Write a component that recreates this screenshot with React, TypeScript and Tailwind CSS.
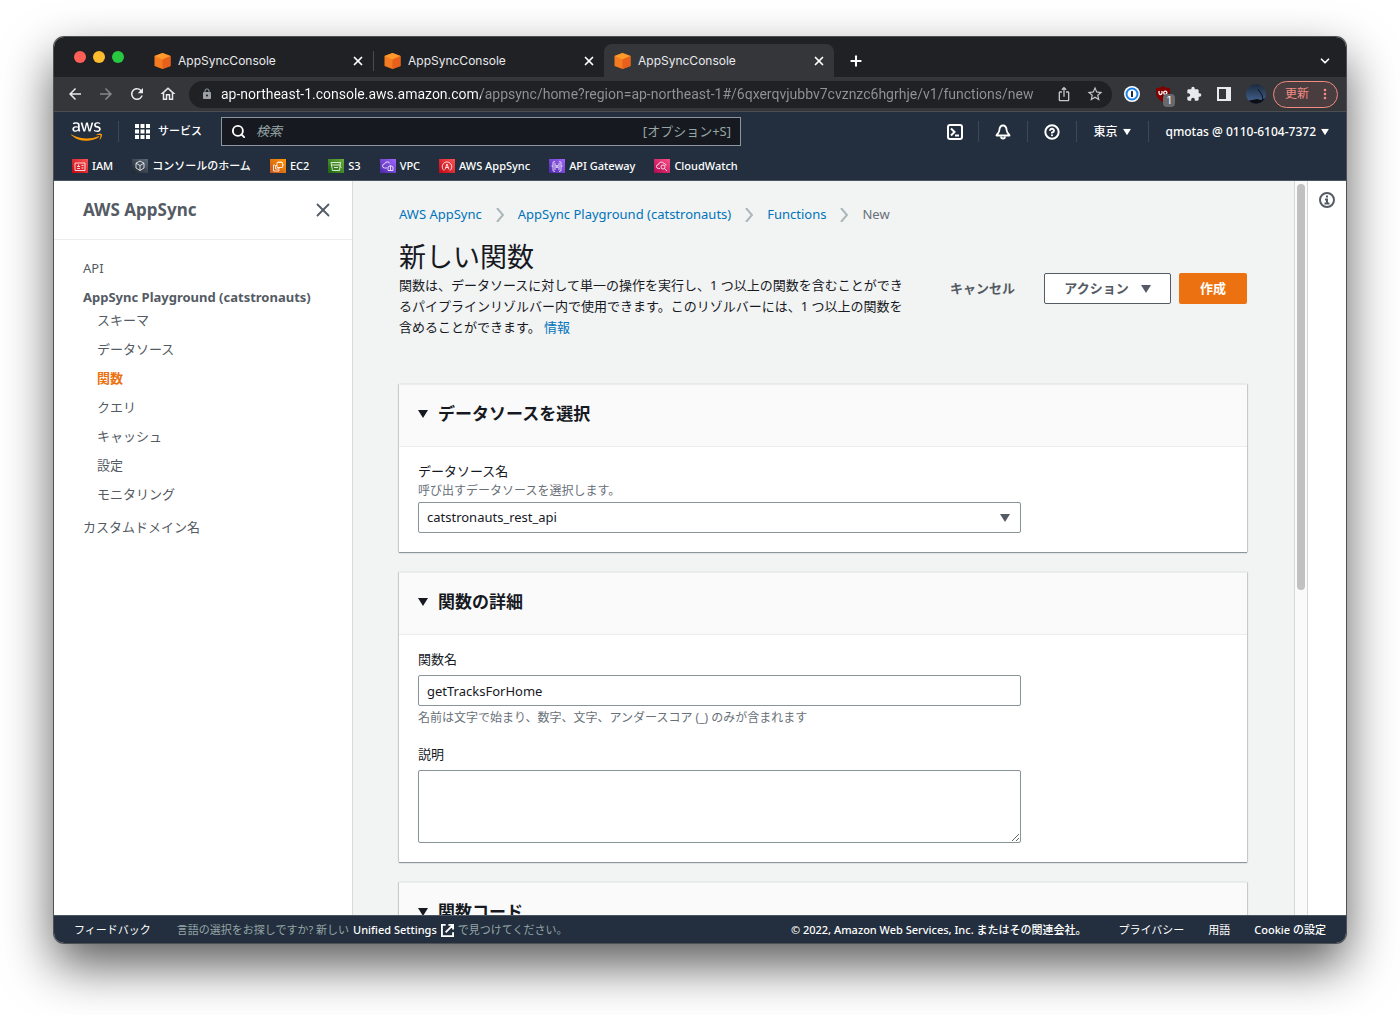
import type { ReactNode } from "react";
import {
  MdArrowBack,
  MdArrowForward,
  MdExtension,
  MdIosShare,
  MdLock,
  MdMoreVert,
  MdOutlineHome,
  MdRefresh,
  MdStarBorder
} from "react-icons/md";
import { FaAws } from "react-icons/fa";
import { ChevronDown, CircleHelp, Plus, Search, X } from "lucide-react";

const PAGE_URL =
  "ap-northeast-1.console.aws.amazon.com/appsync/home?region=ap-northeast-1#/6qxerqvjubbv7cvznzc6hgrhje/v1/functions/new";

const TABS = [
  { id: 1, title: "AppSyncConsole", active: false },
  { id: 2, title: "AppSyncConsole", active: false },
  { id: 3, title: "AppSyncConsole", active: true }
];

const SIDE_LINKS = ["スキーマ", "データソース", "関数", "クエリ", "キャッシュ", "設定", "モニタリング"];

type Favorite = { label: string; from: string; to: string; glyph: ReactNode };

const FAVORITES: Favorite[] = [
  {
    label: "IAM",
    from: "#bd0816",
    to: "#ff5252",
    glyph: <path d="M3 4h10v7.500H3zM5 9.500h3M5 7.500h3M6.500 5.500v2M9.500 6.500h2M9.500 9h2" />
  },
  {
    label: "コンソールのホーム",
    from: "#1d242e",
    to: "#5d6b7a",
    glyph: <path d="M8 2l4 2.200v4.800L8 11.500 4 9V4.200zM4 4.200l4 2.300 4-2.300M8 6.500v5" />
  },
  {
    label: "EC2",
    from: "#c8511b",
    to: "#ff9900",
    glyph: <path d="M7 3.500h5.500v5H7zM5 6H3.500v6H9v-1.500M9 3.500V2M11 3.500V2M12.500 6H14M7 6.500H5.500v3.500H9V8.500" />
  },
  {
    label: "S3",
    from: "#1b660f",
    to: "#6cae3e",
    glyph: <path d="M3 3.500h9.500L11.500 11.500h-7zM3.500 6H12M6 8.500h4M12 7.500l1.500 1" />
  },
  {
    label: "VPC",
    from: "#4d27a8",
    to: "#a166ff",
    glyph: <path d="M7 9H4.500a2 2 0 0 1 0-4A3 3 0 0 1 10 4.500M8 8l2.500-1.500L13 8v3.500H8zM10.500 7v4.500" />
  },
  {
    label: "AWS AppSync",
    from: "#bd0816",
    to: "#ff5252",
    glyph: <path d="M5 11.500a4.800 4.800 0 1 1 6 0M6 10.500l2-5.500 2 5.500M6.800 8.500h2.400" />
  },
  {
    label: "API Gateway",
    from: "#4d27a8",
    to: "#a166ff",
    glyph: <path d="M6 2.500L4 3.200v8.600l2 .7M10 2.500l2 .7v8.600l-2 .7M6 4v7M10 4v7M7 6l2 3M9 6L7 9M2.500 7H4M12 7h1.500" />
  },
  {
    label: "CloudWatch",
    from: "#b0084d",
    to: "#ff4f8b",
    glyph: (
      <>
        <path d="M6 9.500H4.500a2 2 0 0 1 0-4A3 3 0 0 1 10 4.500 2 2 0 0 1 12 6.500M10.500 9.500L13 12" />
        <circle cx="9" cy="8" r="2" />
      </>
    )
  }
];

function CubeIcon() {
  return (
    <svg viewBox="0 0 17 16" className="h-4 w-[17px] shrink-0" aria-hidden="true">
      <path d="M8.500 0l8 3v10l-8 3-8-3V3z" fill="#f47b20" />
      <path d="M8.500 0l8 3-8 3.500-8-3.500z" fill="#fd9a2b" />
      <path d="M16.500 3l-8 3.500V16l8-3z" fill="#e95f1c" />
    </svg>
  );
}

function Caret({ className = "" }: { className?: string }) {
  return (
    <svg viewBox="0 0 10 8" fill="currentColor" className={`h-2 w-[10px] shrink-0 ${className}`} aria-hidden="true">
      <path d="M0 0h10L5 8z" />
    </svg>
  );
}

function NavDivider() {
  return <span className="h-[21px] w-px bg-[#3c4856]" />;
}

function TabStrip() {
  return (
    <div className="flex h-10 shrink-0 items-end bg-[#202124] pl-5">
      <div className="flex h-10 w-[70px] shrink-0 items-center gap-[7px]">
        <button type="button" aria-label="閉じる" className="size-3 rounded-full bg-[#ff5f57]" />
        <button type="button" aria-label="最小化" className="size-3 rounded-full bg-[#febc2e]" />
        <button type="button" aria-label="最大化" className="size-3 rounded-full bg-[#28c840]" />
      </div>
      {TABS.map((tab) => (
        <div
          key={tab.id}
          className={`flex h-[33px] w-[230px] items-center rounded-t-lg pr-2 pl-[10px] ${tab.active ? "bg-[#35363a]" : ""}`}
        >
          <CubeIcon />
          <button type="button" className="ml-[7px] flex-1 text-left text-xs text-[#e8eaed]">
            {tab.title}
          </button>
          <button type="button" aria-label="タブを閉じる" className="text-white">
            <X className="size-[14px]" strokeWidth={3} />
          </button>
          {tab.id === 1 ? <span className="-mr-2 ml-2 h-5 w-px bg-[#4a4c50]" /> : null}
        </div>
      ))}
      <button type="button" aria-label="新しいタブ" className="ml-[14px] flex h-[33px] items-center text-white">
        <Plus className="size-4" strokeWidth={3} />
      </button>
      <button type="button" aria-label="タブを検索" className="mr-[14px] ml-auto flex h-[33px] items-center text-white">
        <ChevronDown className="size-[14px]" strokeWidth={3} />
      </button>
    </div>
  );
}

function Toolbar() {
  return (
    <div className="flex h-[35px] shrink-0 items-center border-b border-[#4c4e52] bg-[#35363a] pr-2 pl-3 text-[#e8eaed]">
      <div className="flex w-[123px] shrink-0 items-center gap-[13px]">
        <button type="button" aria-label="戻る">
          <MdArrowBack className="size-[18px]" />
        </button>
        <button type="button" aria-label="進む" className="text-[#85878b]">
          <MdArrowForward className="size-[18px]" />
        </button>
        <button type="button" aria-label="再読み込み">
          <MdRefresh className="size-[18px]" />
        </button>
        <button type="button" aria-label="ホーム">
          <MdOutlineHome className="size-[18px]" />
        </button>
      </div>
      <div className="flex h-[27px] min-w-0 flex-1 items-center rounded-full bg-[#202124] pr-2 pl-3">
        <MdLock className="size-3 shrink-0 text-[#9aa0a6]" />
        <input
          aria-label="アドレス"
          defaultValue={PAGE_URL}
          className="ml-2 min-w-0 flex-1 bg-linear-to-r from-white from-[260px] to-[#929397] to-[260px] bg-clip-text font-['Roboto',sans-serif] text-sm text-transparent outline-none"
        />
        <button type="button" aria-label="共有" className="ml-2 text-[#c4c7c5]">
          <MdIosShare className="size-4" />
        </button>
        <button type="button" aria-label="ブックマーク" className="ml-[14px] text-[#c4c7c5]">
          <MdStarBorder className="size-[18px]" />
        </button>
      </div>
      <div className="ml-3 flex shrink-0 items-center gap-[15px]">
        <button type="button" aria-label="1Password">
          <svg viewBox="0 0 16 16" className="size-4">
            <circle cx="8" cy="8" r="8" fill="#fff" />
            <circle cx="8" cy="8" r="5.500" fill="#fff" stroke="#1a80e6" strokeWidth="2" />
            <rect x="7" y="5" width="2" height="6" rx=".5" fill="#1b2a41" />
          </svg>
        </button>
        <button type="button" aria-label="uBlock Origin" className="relative w-4">
          <svg viewBox="0 0 16 16" className="size-4">
            <path d="M8 0c2 1.500 4 2 7 2v5c0 4-3 7-7 9-4-2-7-5-7-9V2c3 0 5-.5 7-2z" fill="#800000" />
            <path d="M4 5v2a1.500 1.500 0 0 0 3 0V5" fill="none" stroke="#fff" strokeWidth="1.300" />
            <circle cx="10.300" cy="6.800" r="1.600" fill="none" stroke="#fff" strokeWidth="1.300" />
          </svg>
          <span className="absolute top-2 left-2 flex h-[13px] w-3 items-center justify-center rounded-sm bg-[#67696d] text-[10px] text-white">
            1
          </span>
        </button>
        <button type="button" aria-label="拡張機能">
          <MdExtension className="size-4" />
        </button>
        <button type="button" aria-label="サイドパネル">
          <svg viewBox="0 0 14 14" className="size-[14px]">
            <path d="M0 0h14v14H0zM2 2v10h7V2z" fill="currentColor" fillRule="evenodd" />
          </svg>
        </button>
        <button type="button" aria-label="プロフィール">
          <svg viewBox="0 0 20 20" className="size-5">
            <defs>
              <clipPath id="avatar">
                <circle cx="10" cy="10" r="10" />
              </clipPath>
              <linearGradient id="sky" x2="0" y2="1">
                <stop offset="0" stopColor="#1c2a3c" />
                <stop offset="1" stopColor="#48689a" />
              </linearGradient>
            </defs>
            <g clipPath="url(#avatar)">
              <path d="M0 0h20v20H0z" fill="url(#sky)" />
              <path d="M0 17l6-1 5-1 4 1 5-2v6H0z" fill="#0d0f14" />
              <path d="M12 5l4 6 1 5" fill="none" stroke="#0d0f14" />
            </g>
          </svg>
        </button>
      </div>
      <button
        type="button"
        className="ml-[7px] flex h-[27px] w-[65px] shrink-0 items-center justify-between rounded-full border border-[#f28b82] bg-[#4a3d40] pr-1 pl-[11px] text-[12px] text-[#f28b82]"
      >
        更新
        <MdMoreVert className="size-4" />
      </button>
    </div>
  );
}

function ConsoleNav() {
  return (
    <header className="h-[69px] shrink-0 border-b border-[#4a5462] bg-[#232f3e] pt-[5px] text-[11px] font-medium text-white">
      <div className="flex h-[29px] items-center pr-4 pl-[17px]">
        <a href="#home" aria-label="AWS" className="block w-[31px]">
          <svg width="0" height="0" className="absolute">
            <linearGradient id="aws-fill" gradientUnits="userSpaceOnUse" x1="0" y1="0" x2="0" y2="512">
              <stop offset=".6" stopColor="#fff" />
              <stop offset=".6" stopColor="#f90" />
            </linearGradient>
          </svg>
          <FaAws className="h-[25px] w-[31px]" fill="url(#aws-fill)" stroke="none" />
        </a>
        <span className="ml-4 flex">
          <NavDivider />
        </span>
        <button type="button" className="ml-4 flex w-[86px] items-center gap-2">
          <svg viewBox="0 0 15 15" fill="currentColor" className="size-[15px] shrink-0" aria-hidden="true">
            <path d="M0 0h4v4H0zM5.500 0h4v4h-4zM11 0h4v4h-4zM0 5.500h4v4H0zM5.500 5.500h4v4h-4zM11 5.500h4v4h-4zM0 11h4v4H0zM5.500 11h4v4h-4zM11 11h4v4h-4z" />
          </svg>
          サービス
        </button>
        <label className="flex h-[29px] w-[520px] items-center border border-[#8d969f] bg-[#16191f] px-[9px] text-[13px] font-normal">
          <Search className="size-[15px]" strokeWidth={3} />
          <input
            aria-label="検索"
            placeholder="検索"
            className="ml-[10px] min-w-0 flex-1 outline-none placeholder:text-[#95a5a6] placeholder:italic"
          />
          <span className="text-[#95a5a6]">[オプション+S]</span>
        </label>
        <div className="ml-auto flex items-center text-xs">
          <button type="button" aria-label="CloudShell" className="mr-[15px]">
            <svg viewBox="0 0 16 16" fill="none" stroke="currentColor" strokeWidth="2" className="size-4">
              <rect x="1" y="1" width="14" height="14" rx="2" />
              <path d="M4 4.500L7.500 8 4 11.500M8 11.500h4" />
            </svg>
          </button>
          <NavDivider />
          <button type="button" aria-label="通知" className="mx-4">
            <svg viewBox="0 0 16 16" fill="none" stroke="currentColor" strokeWidth="1.800" strokeLinejoin="round" className="size-4">
              <path d="M8 1.500C5.500 1.500 4.500 4 4.300 6.500 4 9 2.500 9.500 1.500 11.500h13c-1-2-2.500-2.500-2.800-5C11.500 4 10.500 1.500 8 1.500z" />
              <path d="M6 12.500a2 2 0 0 0 4 0" />
            </svg>
          </button>
          <NavDivider />
          <button type="button" aria-label="ヘルプ" className="mx-4">
            <CircleHelp className="size-4" strokeWidth={3} />
          </button>
          <NavDivider />
          <button type="button" className="mx-4 flex items-center gap-[5px]">
            東京
            <Caret className="scale-80" />
          </button>
          <NavDivider />
          <button type="button" className="ml-4 flex items-center gap-1">
            qmotas @ 0110-6104-7372
            <Caret className="scale-80" />
          </button>
        </div>
      </div>
      <nav className="flex h-[34px] items-center gap-[19px] pt-[6px] pl-[18px]">
        {FAVORITES.map((fav, i) => (
          <a key={fav.label} href={`#fav-${i}`} className="flex items-center gap-1">
            <svg viewBox="0 0 16 14" className="h-[14px] w-4" fill="none" stroke="#fff" strokeWidth=".8" aria-hidden="true">
              <linearGradient id={`fav-fill-${i}`} x1="0" y1="1" x2="1" y2="0">
                <stop offset="0" stopColor={fav.from} />
                <stop offset="1" stopColor={fav.to} />
              </linearGradient>
              <path d="M0 0h16v14H0z" fill={`url(#fav-fill-${i})`} stroke="none" />
              {fav.glyph}
            </svg>
            {fav.label}
          </a>
        ))}
      </nav>
    </header>
  );
}

function Sidebar() {
  return (
    <aside className="w-[299px] shrink-0 border-r border-[#d5dbdb] bg-white text-[13px] text-[#545b64]">
      <div className="flex h-[59px] items-center justify-between border-b border-[#eaeded] pr-[18px] pl-[29px]">
        <h2 className="text-[17px] font-bold">AWS AppSync</h2>
        <button type="button" aria-label="ナビゲーションを閉じる">
          <X className="size-[22px]" strokeWidth={2} />
        </button>
      </div>
      <nav className="flex flex-col pt-[14px] pl-[29px] leading-[29px]">
        <a href="#api">API</a>
        <a href="#playground" className="h-[23px] font-bold">
          AppSync Playground (catstronauts)
        </a>
        <ul className="pl-[14px]">
          {SIDE_LINKS.map((label) => (
            <li key={label}>
              <a href={`#${label}`} className={label === "関数" ? "font-bold text-[#ec7211]" : ""}>
                {label}
              </a>
            </li>
          ))}
        </ul>
        <a href="#domains" className="mt-1">
          カスタムドメイン名
        </a>
      </nav>
    </aside>
  );
}

function Breadcrumbs() {
  const crumbs = ["AWS AppSync", "AppSync Playground (catstronauts)", "Functions"];

  return (
    <nav className="flex h-5 items-center text-[#0073bb]">
      {crumbs.map((crumb) => (
        <span key={crumb} className="flex items-center">
          <a href="#crumb">{crumb}</a>
          <svg viewBox="0 0 8 14" fill="none" stroke="#aab7b8" strokeWidth="2" className="mx-[14px] h-[14px] w-2" aria-hidden="true">
            <path d="M1 0l6 7-6 7" />
          </svg>
        </span>
      ))}
      <span className="text-[#687078]">New</span>
    </nav>
  );
}

function Panel({ title, children }: { title: string; children?: ReactNode }) {
  return (
    <section className="mb-5 bg-white shadow-[0_1px_1px_0_rgba(0,28,36,0.4),1px_0_1px_0_rgba(0,28,36,0.12),-1px_0_1px_0_rgba(0,28,36,0.12)]">
      <div className="flex h-[63px] items-center border-y border-[#eaeded] bg-[#fafafa] px-[19px] pb-[3px]">
        <button type="button" className="flex items-center gap-[10px]">
          <Caret />
          <h2 className="text-[17px] leading-6 font-bold">{title}</h2>
        </button>
      </div>
      <div className="px-[19px] pt-[14px] pb-[19px]">{children}</div>
    </section>
  );
}

function Content() {
  return (
    <main className="min-w-0 flex-1 overflow-hidden bg-[#f2f3f3] pt-6 pr-[47px] pl-[46px] text-[13px] text-[#16191f]">
      <Breadcrumbs />
      <div className="mt-4 flex items-start justify-between">
        <div className="w-[524px]">
          <h1 className="mb-[2px] text-[27px] leading-8">新しい関数</h1>
          <p className="max-w-[516px] leading-[21px]">
            関数は、データソースに対して単一の操作を実行し、1 つ以上の関数を含むことができるパイプラインリゾルバー内で使用できます。このリゾルバーには、1 つ以上の関数を含めることができます。{" "}
            <a href="#info" className="text-[#0073bb]">
              情報
            </a>
          </p>
        </div>
        <div className="mt-8 flex font-bold text-[#545b64]">
          <button type="button" className="mr-[29px] h-[31px]">
            キャンセル
          </button>
          <button
            type="button"
            className="mr-2 flex h-[31px] w-[127px] items-center justify-center gap-3 rounded-xs border border-[#545b64] bg-white"
          >
            アクション
            <Caret />
          </button>
          <button type="button" className="h-[31px] w-[68px] rounded-xs bg-[#ec7211] text-white">
            作成
          </button>
        </div>
      </div>

      <div className="mt-[46px]">
        <Panel title="データソースを選択">
          <label htmlFor="data-source" className="block leading-5">
            データソース名
          </label>
          <p className="mb-px text-[12px] leading-5 text-[#687078]">呼び出すデータソースを選択します。</p>
          <div className="relative max-w-[603px]">
            <select
              id="data-source"
              className="h-[31px] w-full appearance-none rounded-xs border border-[#879596] bg-white px-2 outline-none"
            >
              <option>catstronauts_rest_api</option>
            </select>
            <Caret className="pointer-events-none absolute top-3 right-[11px] text-[#545b64]" />
          </div>
        </Panel>

        <Panel title="関数の詳細">
          <label htmlFor="function-name" className="block h-[26px] leading-5">
            関数名
          </label>
          <input
            id="function-name"
            defaultValue="getTracksForHome"
            className="block h-[31px] w-full max-w-[603px] rounded-xs border border-[#879596] bg-white px-2 outline-none"
          />
          <p className="text-[12px] leading-6 text-[#687078]">
            名前は文字で始まり、数字、文字、アンダースコア (_) のみが含まれます
          </p>
          <label htmlFor="description" className="mt-[14px] block h-[26px] leading-5">
            説明
          </label>
          <textarea
            id="description"
            className="block h-[73px] w-full max-w-[603px] rounded-xs border border-[#879596] bg-white px-2 outline-none"
          />
        </Panel>

        <Panel title="関数コード" />
      </div>
    </main>
  );
}

function Footer() {
  return (
    <footer className="flex h-7 shrink-0 items-center border-t border-[#4a5462] bg-[#232f3e] px-5 pt-[2px] text-[11px] text-white">
      <button type="button">フィードバック</button>
      <p className="ml-[26px] flex items-center text-[#95a5a6]">
        言語の選択をお探しですか? 新しい
        <a href="#settings" className="mx-1 flex items-center gap-1 font-medium text-white">
          Unified Settings
          <svg viewBox="0 0 14 14" fill="none" stroke="currentColor" strokeWidth="2" className="size-[13px]" aria-hidden="true">
            <path d="M5 1H1v12h12V9M8 1h5v5M13 1L5 9" />
          </svg>
        </a>
        で見つけてください。
      </p>
      <p className="mr-8 ml-auto font-medium">© 2022, Amazon Web Services, Inc. またはその関連会社。</p>
      <a href="#privacy">プライバシー</a>
      <a href="#terms" className="mx-6">
        用語
      </a>
      <button type="button" className="font-medium">
        Cookie の設定
      </button>
    </footer>
  );
}

export default function App() {
  return (
    <div className="flex h-screen flex-col overflow-hidden bg-white px-[54px] pt-[37px] pb-[72px] font-['Noto_Sans','Noto_Sans_CJK_JP',sans-serif]">
      <div className="flex min-h-0 flex-1 flex-col overflow-hidden rounded-[10px] shadow-[0_0_0_1px_#505152,0_22px_50px_rgba(0,0,0,0.65)]">
        <div className="shrink-0 font-['Inter','Noto_Sans_CJK_JP',sans-serif]">
          <TabStrip />
          <Toolbar />
        </div>
        <ConsoleNav />
        <div className="flex min-h-0 flex-1">
          <Sidebar />
          <Content />
          <div className="w-[14px] shrink-0 border-x border-[#d5d7d7] bg-[#fafafa] px-[2px] pt-[3px]">
            <div className="h-[406px] w-2 rounded-full bg-[#c1c1c1]" />
          </div>
          <div className="flex w-[38px] shrink-0 justify-center bg-white pt-[11px] text-[#545b64]">
            <button type="button" aria-label="情報パネル" className="size-4">
              <svg viewBox="0 0 16 16" fill="none" stroke="currentColor" strokeWidth="2">
                <circle cx="8" cy="8" r="7" />
                <path d="M8 3.500v2M6 7.500h2V12M5.500 11.500h5" />
              </svg>
            </button>
          </div>
        </div>
        <Footer />
      </div>
    </div>
  );
}
